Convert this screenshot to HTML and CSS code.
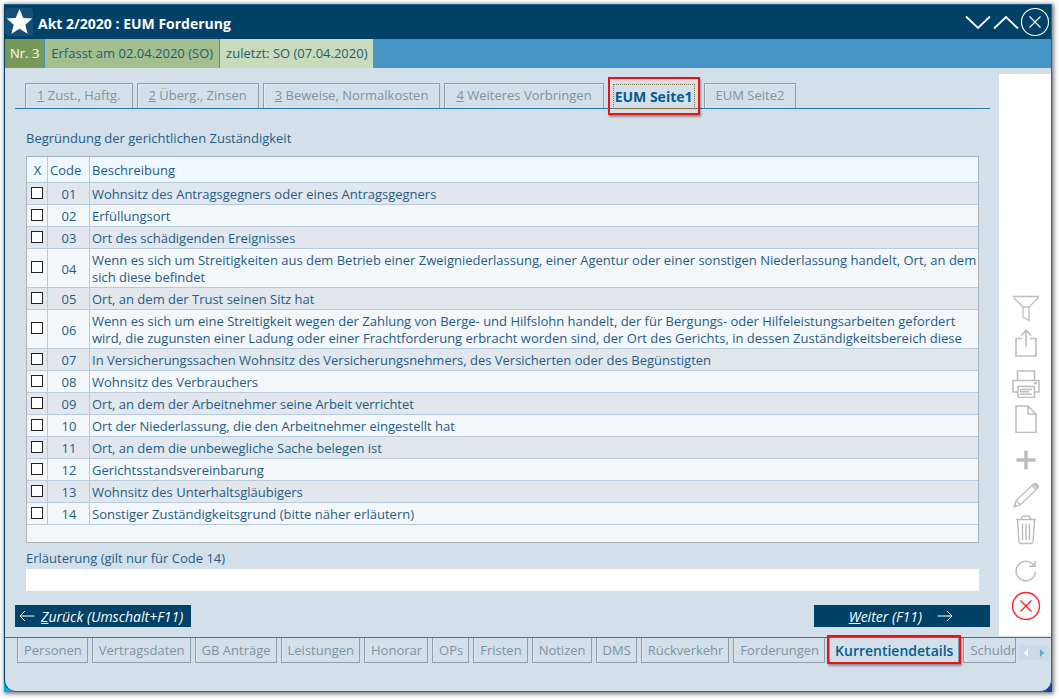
FILE: index.html
```html
<!DOCTYPE html>
<html lang="de">
<head>
<meta charset="utf-8">
<meta name="viewport" content="width=device-width, initial-scale=1">
<title>Akt 2/2020 : EUM Forderung</title>
<link rel="stylesheet" href="styles.css">
</head>
<body>
<div class="backdrop">
<div class="window">
  <header class="titlebar">
    <span class="star"><svg width="28" height="28" viewBox="0 0 28 28"><path fill="#fff" d="M14.500 1l3.800 9 9 .6-7 6.200 2.300 9-8.100-5-8.100 5 2.300-9-7-6.200 9-.6z"/></svg></span>
    <h1 class="title">Akt 2/2020 : EUM Forderung</h1>
    <div class="window-controls">
      <button type="button" class="icon-btn" aria-label="Nach unten"><svg width="28" height="28" viewBox="0 0 28 28"><path d="M2 8.500L14 20 26 8.500"/></svg></button>
      <button type="button" class="icon-btn" aria-label="Nach oben"><svg width="28" height="28" viewBox="0 0 28 28"><path d="M2 20.500L14 9 26 20.500"/></svg></button>
      <button type="button" class="icon-btn" aria-label="Schließen"><svg class="thin" width="30" height="30" viewBox="0 0 30 30"><circle cx="15" cy="15" r="13.500"/><path d="M9.500 9.500l11 11M20.500 9.500l-11 11"/></svg></button>
    </div>
  </header>
  <div class="infobar">
    <span class="info info-nr">Nr. 3</span>
    <span class="info info-created">Erfasst am 02.04.2020 (SO)</span>
    <span class="info info-last">zuletzt: SO (07.04.2020)</span>
  </div>
  <div class="body">
    <main class="content">
      <nav class="tabs">
        <button type="button" class="tab"><u>1</u> Zust., Haftg.</button>
        <button type="button" class="tab"><u>2</u> Überg., Zinsen</button>
        <button type="button" class="tab"><u>3</u> Beweise, Normalkosten</button>
        <button type="button" class="tab"><u>4</u> Weiteres Vorbringen</button>
        <button type="button" class="tab tab-active"><span class="focus">EUM Seite1</span></button>
        <button type="button" class="tab">EUM Seite2</button>
      </nav>
      <section class="form">
        <h2 class="caption">Begründung der gerichtlichen Zuständigkeit</h2>
        <div class="grid">
          <table class="codes">
            <thead><tr><th class="col-x">X</th><th class="col-code">Code</th><th>Beschreibung</th></tr></thead>
            <tbody>
              <tr><td class="c"><input type="checkbox" aria-label="Code 01"></td><td class="c">01</td><td>Wohnsitz des Antragsgegners oder eines Antragsgegners</td></tr>
              <tr><td class="c"><input type="checkbox" aria-label="Code 02"></td><td class="c">02</td><td>Erfüllungsort</td></tr>
              <tr><td class="c"><input type="checkbox" aria-label="Code 03"></td><td class="c">03</td><td>Ort des schädigenden Ereignisses</td></tr>
              <tr><td class="c"><input type="checkbox" aria-label="Code 04"></td><td class="c">04</td><td>Wenn es sich um Streitigkeiten aus dem Betrieb einer Zweigniederlassung, einer Agentur oder einer sonstigen Niederlassung handelt, Ort, an dem sich diese befindet</td></tr>
              <tr><td class="c"><input type="checkbox" aria-label="Code 05"></td><td class="c">05</td><td>Ort, an dem der Trust seinen Sitz hat</td></tr>
              <tr><td class="c"><input type="checkbox" aria-label="Code 06"></td><td class="c">06</td><td>Wenn es sich um eine Streitigkeit wegen der Zahlung von Berge- und Hilfslohn handelt, der für Bergungs- oder Hilfeleistungsarbeiten gefordert wird, die zugunsten einer Ladung oder einer Frachtforderung erbracht worden sind, der Ort des Gerichts, in dessen Zuständigkeitsbereich diese</td></tr>
              <tr><td class="c"><input type="checkbox" aria-label="Code 07"></td><td class="c">07</td><td>In Versicherungssachen Wohnsitz des Versicherungsnehmers, des Versicherten oder des Begünstigten</td></tr>
              <tr><td class="c"><input type="checkbox" aria-label="Code 08"></td><td class="c">08</td><td>Wohnsitz des Verbrauchers</td></tr>
              <tr><td class="c"><input type="checkbox" aria-label="Code 09"></td><td class="c">09</td><td>Ort, an dem der Arbeitnehmer seine Arbeit verrichtet</td></tr>
              <tr><td class="c"><input type="checkbox" aria-label="Code 10"></td><td class="c">10</td><td>Ort der Niederlassung, die den Arbeitnehmer eingestellt hat</td></tr>
              <tr><td class="c"><input type="checkbox" aria-label="Code 11"></td><td class="c">11</td><td>Ort, an dem die unbewegliche Sache belegen ist</td></tr>
              <tr><td class="c"><input type="checkbox" aria-label="Code 12"></td><td class="c">12</td><td>Gerichtsstandsvereinbarung</td></tr>
              <tr><td class="c"><input type="checkbox" aria-label="Code 13"></td><td class="c">13</td><td>Wohnsitz des Unterhaltsgläubigers</td></tr>
              <tr><td class="c"><input type="checkbox" aria-label="Code 14"></td><td class="c">14</td><td>Sonstiger Zuständigkeitsgrund (bitte näher erläutern)</td></tr>
            </tbody>
          </table>
        </div>
        <label class="field-label" for="note">Erläuterung (gilt nur für Code 14)</label>
        <input class="field" id="note" type="text">
      </section>
      <div class="actions">
        <button type="button" class="nav-btn nav-back"><svg width="16" height="12" viewBox="0 0 16 12"><path d="M15.500 6H1M6 1L1 6l5 5"/></svg><span><u>Z</u>urück (Umschalt+F11)</span></button>
        <button type="button" class="nav-btn nav-next"><span><u>W</u>eiter (F11)</span><svg width="16" height="12" viewBox="0 0 16 12"><path d="M.5 6H15M10 1l5 5-5 5"/></svg></button>
      </div>
    </main>
    <aside class="tools">
      <div class="tool-group">
        <button type="button" class="tool" aria-label="Filter"><svg width="28" height="28" viewBox="0 0 28 28"><path stroke-width="1.300" d="M2 2.500h24v1.500l-9 9H11L2 4zM11 13v10l6 3.500V13"/></svg></button>
        <button type="button" class="tool" aria-label="Exportieren"><svg width="28" height="28" viewBox="0 0 28 28"><path d="M10 9.500H4V27h20V9.500h-6M14 18V1.500M9 6.500l5-5 5 5"/></svg></button>
      </div>
      <div class="tool-group">
        <button type="button" class="tool" aria-label="Drucken"><svg width="28" height="28" viewBox="0 0 28 28"><path d="M5.500 10V1h17v9M5.500 22H1V10.500h26V22h-4.500M6 16.500h16.500v11H6z"/><path d="M8 19.500h12M8 21.800h9M8 24.200h12"/><circle cx="23.500" cy="13" r=".7"/></svg></button>
        <button type="button" class="tool" aria-label="Neues Dokument"><svg width="28" height="28" viewBox="0 0 28 28"><path d="M4 1h12l8 8v18.500H4zM16 1v8h8"/></svg></button>
      </div>
      <div class="tool-group">
        <button type="button" class="tool" aria-label="Hinzufügen"><svg width="28" height="28" viewBox="0 0 28 28"><path stroke-width="3.500" d="M14 4.500v19M4.500 14h19"/></svg></button>
        <button type="button" class="tool" aria-label="Bearbeiten"><svg width="28" height="28" viewBox="0 0 28 28"><path stroke-width="1.300" d="M2 26l2.200-6.500L21.500 3.200c2.500-2.400 6.300 1.500 4 4L8.500 23.800zM4.200 19.500l4.300 4.300M20 4.800l4 4"/><path fill="#bdbdbd" stroke="none" d="M1.500 26.500l1.200-4 2.800 2.800zM21 3.700c3-3 7.200.8 4.300 4z"/></svg></button>
        <button type="button" class="tool" aria-label="Löschen"><svg width="28" height="30" viewBox="0 0 28 30"><path stroke-width="1.400" d="M4 4.500h20M10 4.500V2.200L11 1.200h6l1 1V4.500M5.500 5l1.500 22q.2 1.500 1.500 1.500h11q1.300 0 1.500-1.500L22.500 5M10.500 8.500V25M14 8.500V25M17.500 8.500V25"/></svg></button>
      </div>
      <div class="tool-group">
        <button type="button" class="tool" aria-label="Aktualisieren"><svg width="28" height="28" viewBox="0 0 28 28"><path stroke-width="1.500" d="M23.500 15a9.700 9.700 0 1 1-3.200-8.200L23 9.300M23 3.500v5.800h-6"/></svg></button>
        <button type="button" class="tool tool-close" aria-label="Abbrechen"><svg width="30" height="30" viewBox="0 0 30 30"><circle cx="15" cy="15" r="13.500"/><path d="M9.500 9.500l11 11M20.500 9.500l-11 11"/></svg></button>
      </div>
    </aside>
  </div>
  <footer class="footer">
    <nav class="views">
      <button type="button" class="view">Personen</button>
      <button type="button" class="view">Vertragsdaten</button>
      <button type="button" class="view">GB Anträge</button>
      <button type="button" class="view">Leistungen</button>
      <button type="button" class="view">Honorar</button>
      <button type="button" class="view">OPs</button>
      <button type="button" class="view">Fristen</button>
      <button type="button" class="view">Notizen</button>
      <button type="button" class="view">DMS</button>
      <button type="button" class="view">Rückverkehr</button>
      <button type="button" class="view">Forderungen</button>
      <button type="button" class="view view-active">Kurrentiendetails</button>
      <button type="button" class="view view-cut">Schuldner</button>
    </nav>
    <div class="scrollers">
      <button type="button" class="scroller" aria-label="Zurückblättern"><svg width="6" height="8" viewBox="0 0 6 8"><path fill="#fff" d="M5 0v8L1 4z"/></svg></button>
      <button type="button" class="scroller" aria-label="Weiterblättern"><svg width="6" height="8" viewBox="0 0 6 8"><path fill="#5fa8d6" d="M1 0v8l4-4z"/></svg></button>
    </div>
  </footer>
</div>
</div>
</body>
</html>
```
FILE: styles.css
```css
* { box-sizing: border-box; }

body {
  margin: 0;
  padding: 4px 7px 7px 4px;
  min-height: 100vh;
  display: flex;
  background: #fff;
  color: #1f5c87;
  font: 13px/17px "Open Sans", "Noto Sans", sans-serif;
}

button, input {
  margin: 0;
  padding: 0;
  border: 0;
  background: none;
  font: inherit;
  color: inherit;
}

svg {
  display: block;
  flex: none;
  fill: none;
  stroke: currentColor;
}

.backdrop {
  flex: 1;
  min-width: 0;
  display: flex;
  background: linear-gradient(90deg, #00aeef 50%, #0a3fb0 50%);
  box-shadow: 1px 1px 4px 1px rgba(0, 0, 0, .5);
}

.window {
  flex: 1;
  min-width: 0;
  display: flex;
  flex-direction: column;
  background: #d4e0e9;
  border: 1px solid #28628a;
  border-left-color: #003f68;
  border-radius: 0 0 12px 12px;
}

.titlebar {
  height: 34px;
  display: flex;
  align-items: center;
  background: #004168;
  color: #fff;
}

.star {
  width: 28px;
  height: 28px;
  border-radius: 4px;
  background: #155078;
}

.star svg { stroke: none; }

.title {
  margin: 4px 0 0 5px;
  flex: 1;
  font-size: 14px;
  line-height: 20px;
  font-weight: 700;
}

.window-controls {
  display: flex;
  align-items: center;
  padding-right: 1px;
}

.icon-btn svg { stroke-width: 1.8; }
.icon-btn .thin { stroke-width: 1.1; }

.infobar {
  height: 29px;
  display: flex;
  gap: 1px;
  background: #4595c6;
}

.info {
  padding: 0 6px;
  line-height: 28px;
  color: #1f5c74;
}

.info-nr { padding: 0 5px; background: #76995a; color: #fff; }
.info-created { background: #a2bf8d; }
.info-last { background: #c9dbba; }

.body {
  flex: 1;
  display: flex;
}

.content {
  flex: 1;
  min-width: 0;
  display: flex;
  flex-direction: column;
  padding: 15px 9px 10px 10px;
}

.tabs {
  height: 26px;
  display: flex;
  gap: 4px;
  padding-left: 10px;
  border-bottom: 1px solid #2a7ab0;
}

.tab {
  padding: 0 11px 1px;
  border: 1px solid #8b9ea9;
  border-bottom: 0;
  box-shadow: inset 1px 1px #e2eaf0;
  color: #7e929e;
  white-space: nowrap;
}

.tab-active, .view-active {
  position: relative;
  color: #005b94;
  font-size: 14px;
}

.tab-active {
  padding: 0 4px;
  border-color: transparent;
  box-shadow: none;
  font-weight: 700;
}

.focus {
  display: block;
  padding: 3px 1px;
  border: 1px dotted #8a7340;
}

.tab-active::after, .view-active::after {
  content: "";
  position: absolute;
  border: 2px solid #ee1111;
  box-shadow: 1px 2px 2px rgba(0, 0, 0, .35);
}

.tab-active::after { inset: -7px -1px -7px -1px; }

.form {
  flex: 1;
  display: flex;
  flex-direction: column;
  padding: 21px 11px 0;
}

.caption {
  margin: 0 0 9px;
  font-size: 13px;
  font-weight: 400;
}

.grid {
  flex: 1;
  border: 1px solid #a9b3bc;
  background: #f3f7fa;
}

.codes {
  width: 100%;
  border-collapse: separate;
  border-spacing: 0;
}

.codes th, .codes td {
  padding: 3px 1px 1px 2px;
  border-bottom: 1px solid #b5cbdc;
  border-right: 1px solid #b5cbdc;
  text-align: left;
  font-weight: 400;
}

.codes th:last-child, .codes td:last-child { border-right: 0; }
.codes th { height: 26px; background: #eff7ff; }
.codes td:first-child { padding: 1px 2px 3px; }
.codes .col-x { width: 21px; text-align: center; }
.codes .col-code { width: 42px; }
.codes .c { text-align: center; }
.codes tbody tr:nth-child(odd) { background: #e1e7ed; }

.codes input {
  appearance: none;
  display: block;
  width: 12px;
  height: 12px;
  margin: 0 auto;
  border: 1px solid #222;
  background: #fff;
}

.field-label { margin: 7px 0 2px; }

.field {
  height: 22px;
  padding: 0 4px;
  background: #fff;
}

.actions {
  display: flex;
  justify-content: space-between;
  margin-top: 14px;
}

.nav-btn {
  width: 176px;
  height: 22px;
  display: flex;
  align-items: center;
  background: #004168;
  color: #fff;
  font-size: 14px;
  font-style: italic;
}

.nav-back { gap: 6px; padding-left: 4px; }
.nav-next { gap: 15px; justify-content: flex-end; padding-right: 37px; }

.tools {
  width: 52px;
  margin: 6px 0 1px;
  display: flex;
  flex-direction: column;
  justify-content: flex-end;
  gap: 6px;
  padding-bottom: 13px;
  background: #fff;
  color: #bdbdbd;
}

.tool {
  width: 100%;
  height: 35px;
  display: flex;
  align-items: center;
  justify-content: center;
}

.tool-group { padding-left: 2px; }
.tool svg { stroke-width: 1.6; }
.tool-close { color: #ff2222; }
.tool-close svg { stroke-width: 1.4; }

.footer {
  height: 54px;
  display: flex;
  align-items: flex-start;
  border-top: 1px solid #2a7ab0;
}

.views {
  flex: 1;
  min-width: 0;
  display: flex;
  gap: 4px;
  padding-left: 12px;
}

.view {
  flex: none;
  height: 25px;
  padding: 0 5px 0 6px;
  border: 1px solid #8b9ea9;
  border-top: 0;
  box-shadow: inset 1px 0 #e2eaf0;
  color: #7e929e;
  white-space: nowrap;
}

.view-active {
  padding: 0 5px;
  color: #005b94;
  font-weight: 600;
}

.view-active::after { inset: -3px -3px -2px -3px; }

.view-cut {
  flex: 0 1 auto;
  min-width: 0;
  overflow: hidden;
  text-align: left;
}

.scrollers {
  display: flex;
  gap: 1px;
  padding: 7px 2px 0;
}

.scroller {
  width: 15px;
  height: 15px;
  display: flex;
  align-items: center;
  justify-content: center;
  background: #cadae6;
}

.scroller svg { stroke: none; }
```
